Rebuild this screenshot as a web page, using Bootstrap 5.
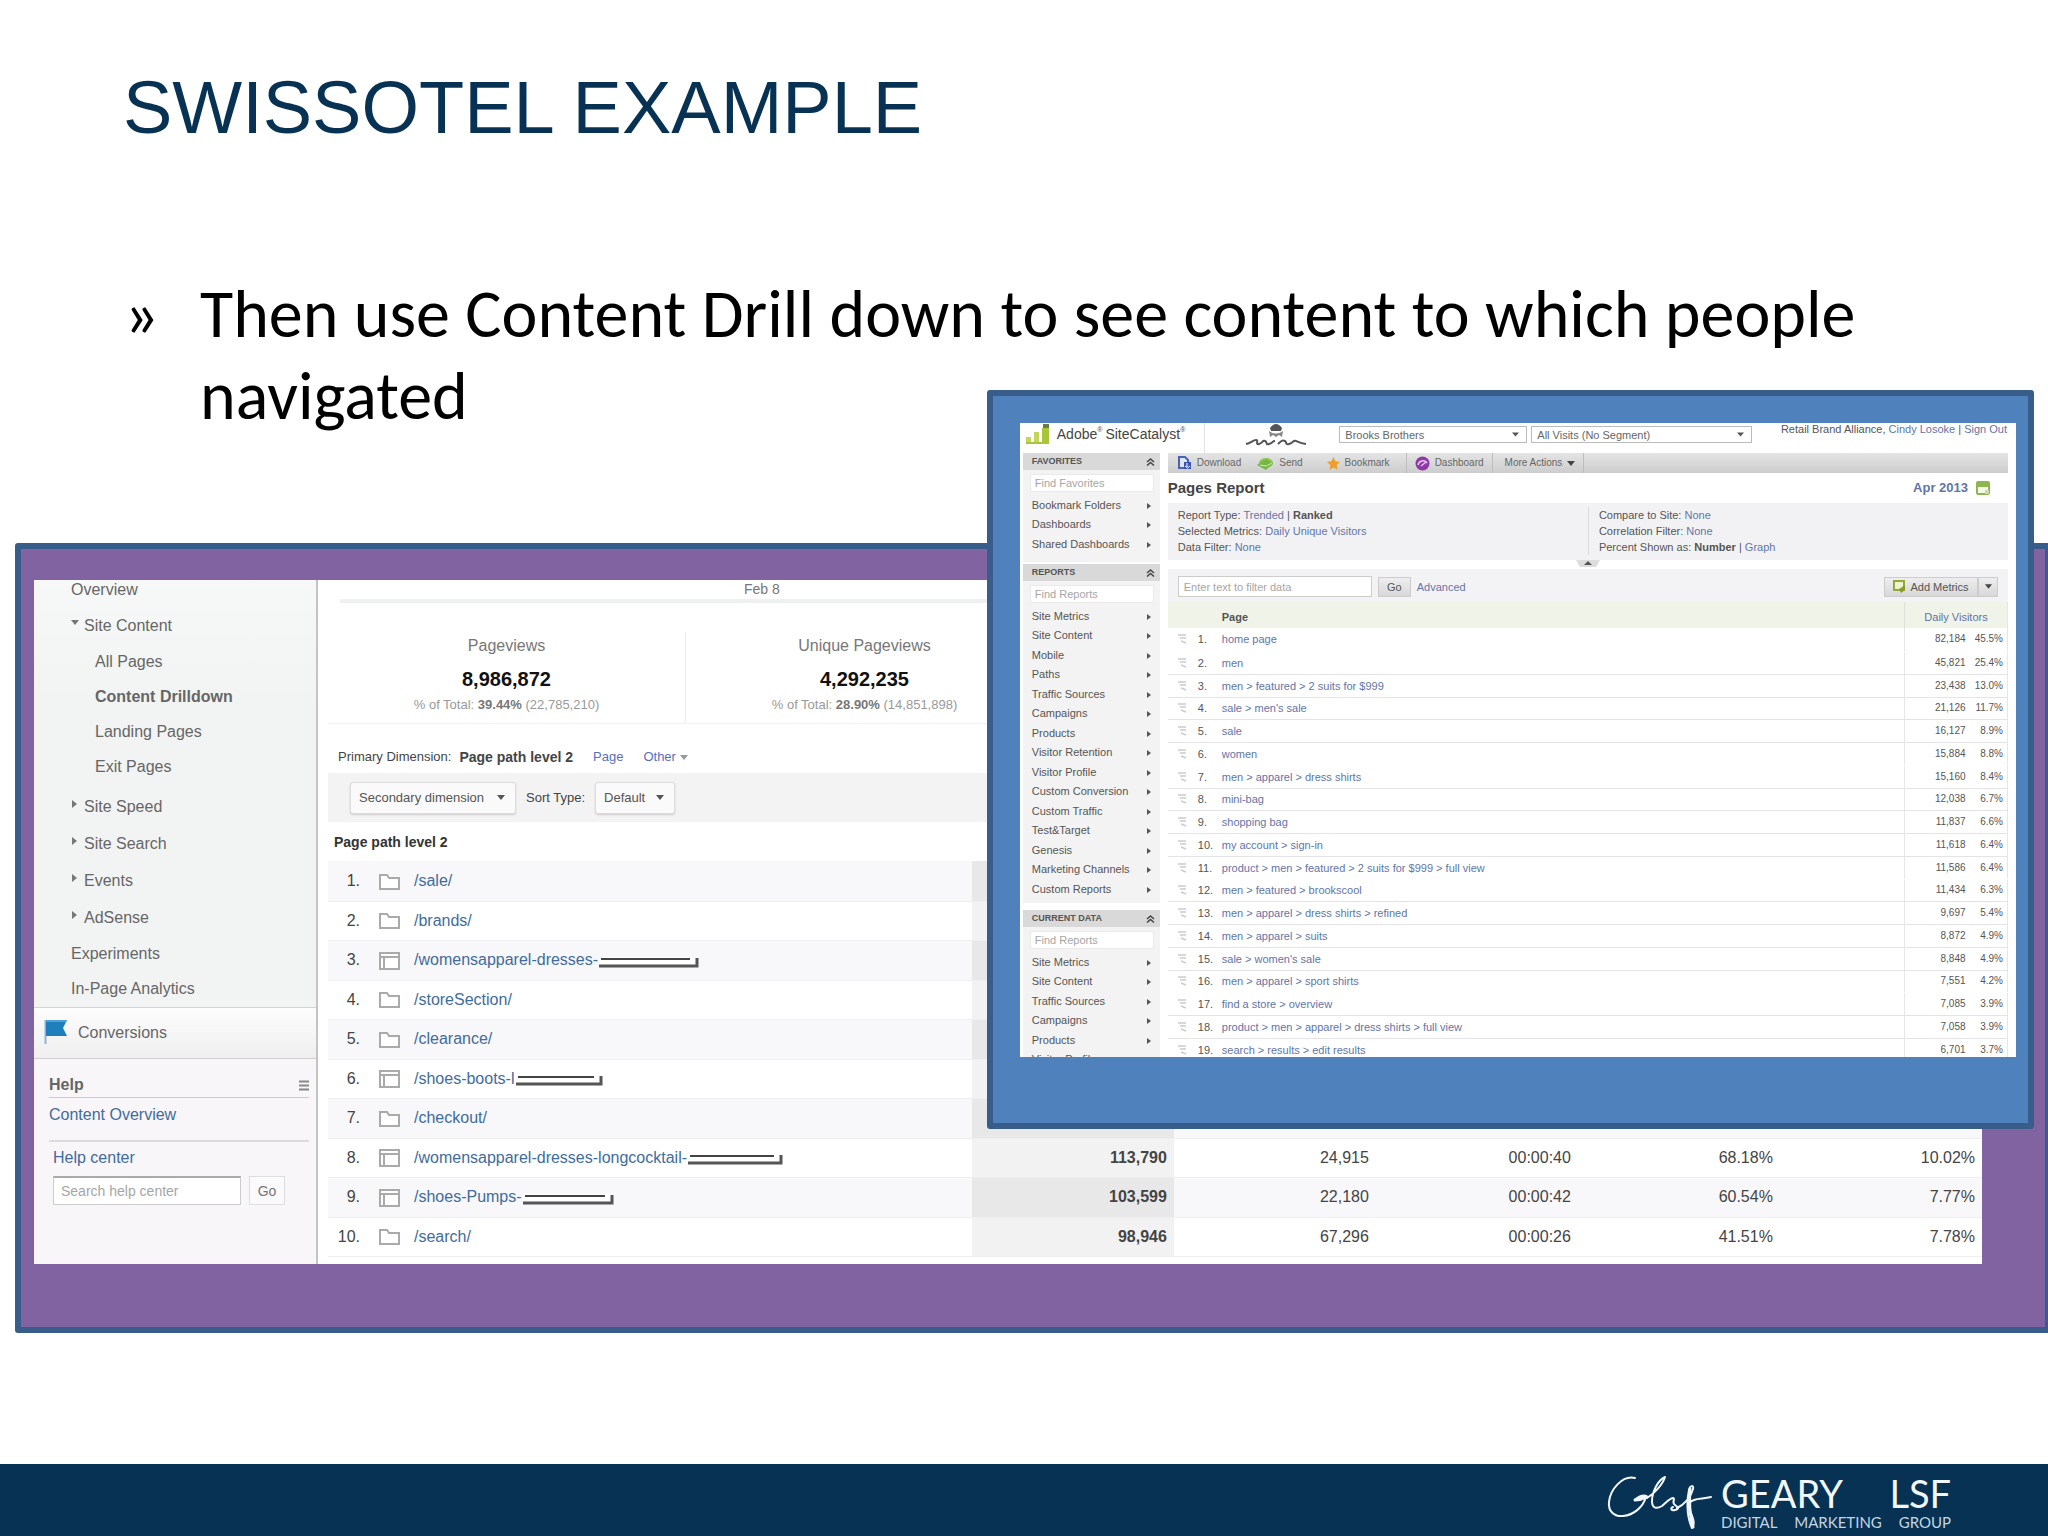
<!DOCTYPE html>
<html lang="en">
<head>
<meta charset="utf-8">
<meta name="viewport" content="width=device-width, initial-scale=1">
<title>Swissotel Example</title>
<link href="https://cdn.jsdelivr.net/npm/bootstrap@5.3.0/dist/css/bootstrap.min.css" rel="stylesheet">
<style>
:root{--navy:#073253;--edge:#385d8a;--purple:#8263a1;--blue:#4f81bd;
--caret:url("data:image/svg+xml,%3Csvg xmlns='http://www.w3.org/2000/svg' viewBox='0 0 10 6'%3E%3Cpath d='M0 0h10L5 6z' fill='%23555'/%3E%3C/svg%3E")}
body{font-family:"Liberation Sans",Arial,sans-serif;background:#fff;color:#000;overflow-x:hidden}
a{text-decoration:none}
.slide{min-height:100vh}
.slide-title{font-size:74px;line-height:90px;color:var(--navy);padding:63px 123px 0;margin:0 0 120px}
.points{font-family:Carlito,Lato,sans-serif;font-size:68px;line-height:82px;padding:0 124px;margin:0 0 106px}
.points .chev{width:76px;flex:none}
.stage{margin-left:15px;margin-bottom:130px}
.frame-purple{background:var(--purple);border:6px solid var(--edge);border-right-width:3px;padding:31px 63px 63px 13px;border-radius:3px 0 0 3px}
.frame-blue{position:absolute;top:-153px;left:47.8%;right:14px;background:var(--blue);border:6px solid var(--edge);border-radius:3px;padding:27px 12px 66px 27px}

/* analytics report */
.ga{background:#fff;font-size:16px;color:#444;overflow:hidden}
.ga-side{width:284px;flex:none;background:#f8f6f9;border-right:2px solid #c4c4c6;line-height:20px;color:#666}
.ga-nav{background:linear-gradient(#f7f8f8,#f2f4f3 30%);margin:0;padding:0 0 1px 37px;border-bottom:1px solid #d4d4d4}
.ga-nav a{display:flex;align-items:center;height:35px;color:inherit}
.ga-nav .grp a{height:37px;gap:5px}
.ga-nav .subs{padding-left:24px;margin-bottom:4px}
.ga-nav li:first-child{margin-top:-8px}
.tri{width:8px;height:8px;flex:none;margin-top:-6px}
.conv{height:51px;gap:10px;padding-left:10px;background:linear-gradient(#fdfdfd,#efefef);border-bottom:1px solid #d0d0d0}
.help{padding:16px 7px 20px 15px}
.help h2{font-size:16px;line-height:20px;font-weight:700;margin:0;padding-bottom:2px;border-bottom:1px solid #ccc}
.help a,.paths a{color:#3f6c9c}
.help .over{display:block;padding:7px 0 15px;border-bottom:2px solid #dcdce0;line-height:20px}
.help label{display:block;color:#3f6c9c;padding:6px 4px 8px;line-height:20px}
.help input{width:188px;height:29px;border:1px solid #ccc;border-top:2px solid #aaa;padding:0 7px;font-size:14px;border-radius:0;background:#fff}
.help input::placeholder,.sc input::placeholder{color:#a6a6a6;opacity:1}
.help button{width:36px;height:29px;font-size:14px;border:1px solid #ddd;background:#faf9fb;color:#777;padding:0}
.ga-main{padding-left:10px;min-width:0}
.axis{height:23px;margin-left:12px;border-bottom:4px solid #eff0f0;font-size:14px;line-height:19px;color:#777;padding-left:404px}
.metric{width:358px;height:91px;margin-top:29px;border-right:1px solid #ededed;text-align:center;line-height:20px;color:#777;padding-top:4px}
.metric b{display:block;font-size:20px;line-height:24px;color:#111;margin:11px 0 4px}
.metric small{font-size:13px;line-height:20px;display:block;color:#999}
.metric small strong{color:#777}
.dims{height:50px;padding:17px 0 0 10px;font-size:13px;line-height:32px;gap:20px;border-top:1px solid #f2f2f2}
.dims b{font-size:14px;margin-left:-12px}
.dims a{color:#5570c0}
.tools{height:49px;background:#f3f3f3;padding-left:22px;gap:10px;font-size:13px}
.tools select{appearance:none;height:32px;border:1px solid #dcdcdc;border-radius:3px;background:#fafafa var(--caret) no-repeat right 10px center/8px 5px;padding:0 8px;color:#555;box-shadow:0 1px 2px #ccc}
.tools .s1{width:166px}.tools .s2{width:80px}
.paths{table-layout:fixed;width:100%;margin-bottom:7px;color:#444;line-height:20px}
.paths th{height:39px;padding:0 6px;font-size:14px;color:#333}
.paths td{padding:0;height:39px;border-bottom:1px solid #efeff0}
.paths tr:nth-child(odd) td{height:40px;background:#f8f7f9}
.paths .no{width:32px;text-align:right}
.paths .ic{width:54px;padding-left:19px}
.paths .val{width:202px;text-align:right;padding-right:7px}
.paths td.hot{background:#f2f2f2;font-weight:700}
.paths tr:nth-child(odd) td.hot{background:#e8e8e8}
.paths svg{display:inline-block;vertical-align:middle}

/* site catalyst report */
.sc{background:#fff;height:634px;overflow:hidden;font-size:11px;line-height:16px;color:#555}
.sc-top{height:30px;padding-left:6px}
.sc-brand{font-size:14px;line-height:22px;color:#444;margin-left:7px}
.sc-brand i{font-style:normal;font-size:7px;line-height:14px;margin-right:3px}
.sc-top select{appearance:none;height:17px;border:1px solid #bbb;font-size:11px;line-height:14px;color:#666;padding:0 5px;margin-top:3px;background:#fff var(--caret) no-repeat right 7px center/7px 5px}
.sc-top .w1{width:188px;margin-left:32px}.sc-top .w2{width:221px;margin-left:4px}
.sc-user{font-size:11px;line-height:12px;padding-right:9px;white-space:nowrap}
.sc a{color:#6275a8}
.sc-side{width:137px;flex:none;margin-left:3px}
.sc-box{background:#f3f3f3;margin-bottom:7px;padding-bottom:4px}
.sc-box.first{margin-bottom:2px;padding-bottom:8px}
.sc-box h3{font-size:9px;line-height:17px;font-weight:700;background:#d9d9d9;margin:0 0 4px;padding:0 5px 0 9px;color:#555}
.sc-box input{display:block;width:124px;height:18px;margin:0 0 4px 7px;border:1px solid #eaeaea;background:#fff;font-size:11px;padding:0 4px}
.sc-box ul{margin:0;padding:0 9px}
.sc-box li{height:19px;line-height:19px}
.sc-box li:nth-child(even){height:20px}
.sc-box li a{color:#555;display:flex;justify-content:space-between;align-items:center}
.sc-box li a::after{content:"";border:3px solid transparent;border-left:4px solid #555;border-right:0;width:0}
.sc-main{margin:0 8px 0 8px;min-width:0}
.sc-bar{height:20px;background:linear-gradient(#e4e4e4,#cdcdcd);font-size:10px;padding-left:10px}
.sc-bar button{border:0;background:none;padding:0;color:#666;display:flex;align-items:center;gap:5px;line-height:20px}
.sc-bar .sep,.rule{width:1px;background:#bdbdbd;align-self:stretch}
.rule{background:#e2e2e2}
.sc h2{font-size:15px;line-height:30px;font-weight:700;margin:0;color:#444}
.sc-date{font-size:13px;font-weight:700;gap:8px;padding-right:18px}
.sc-info{background:#f2f2f4;padding:4px 10px 5px;height:57px}
.sc-info>div{width:50%}
.sc-info .right{border-left:1px solid #ddd;padding-left:10px}
.handle{height:9px}
.sc-filter{height:33px;background:#f3f3f5;padding:2px 10px 0}
.sc-filter input{width:194px;height:21px;border:1px solid #ccc;font-size:11px;padding:0 5px}
.sc-filter button{height:20px;border:1px solid #ccc;background:linear-gradient(#eee,#d8d8d8);font-size:11px;line-height:16px;color:#555;padding:0}
.sc-filter .go{width:33px;margin:0 6px}
.sc-filter .add{width:94px;gap:4px}
.sc-filter .drop{width:20px}
.sc table{width:100%;table-layout:fixed;border-right:1px solid #e6e6e6}
.sc th{height:26px;background:#eff3e8;padding:3px 0 0;color:#555}
.sc td{height:23px;padding:0;border-bottom:1px solid #e4e4e6}
.sc tr:nth-child(4n) td{height:22px}
.sc tr:nth-child(5n+1) td{border-bottom-color:transparent}
.sc .c0{width:30px;padding-left:10px}.sc .c1{width:24px}
.sc .c3{width:61px;border-left:1px solid #e6e6e6;text-align:right;font-size:10px}
.sc .c4{width:42px;text-align:right;font-size:10px;padding-right:4px}
.sc th.vis{border-left:1px solid #dde0d8;text-align:center;font-weight:400}
.sc svg{display:block}

.slide-foot{height:72px;background:var(--navy);color:#f2f7fb;font-family:Lato,sans-serif;padding-right:97px;padding-top:9px}
.logo-words{width:230px}
.logo-words .big{font-size:38px;line-height:40px}
.logo-words .tiny{font-size:15px;line-height:18px;color:#c4d5e2}
</style>
</head>
<body>
<div class="slide d-flex flex-column">
  <header><h1 class="slide-title">SWISSOTEL EXAMPLE</h1></header>
  <ul class="points list-unstyled">
    <li class="d-flex"><span class="chev">»</span><span>Then use Content Drill down to see content to which people navigated</span></li>
  </ul>

  <main class="stage position-relative">
    <section class="frame-purple">
      <div class="ga d-flex">
        <aside class="ga-side">
          <ul class="ga-nav list-unstyled">
            <li><a href="#">Overview</a></li>
            <li class="grp"><a href="#"><svg class="tri" viewBox="0 0 8 8"><path d="M0 1h8L4 6z" fill="#777"/></svg>Site Content</a></li>
            <li><ul class="subs list-unstyled">
              <li class="mt-0"><a href="#">All Pages</a></li>
              <li><a href="#" class="fw-bold">Content Drilldown</a></li>
              <li><a href="#">Landing Pages</a></li>
              <li><a href="#">Exit Pages</a></li>
            </ul></li>
            <li class="grp"><a href="#"><svg class="tri" viewBox="0 0 8 8"><path d="M1 0v8l5-4z" fill="#777"/></svg>Site Speed</a></li>
            <li class="grp"><a href="#"><svg class="tri" viewBox="0 0 8 8"><path d="M1 0v8l5-4z" fill="#777"/></svg>Site Search</a></li>
            <li class="grp"><a href="#"><svg class="tri" viewBox="0 0 8 8"><path d="M1 0v8l5-4z" fill="#777"/></svg>Events</a></li>
            <li class="grp"><a href="#"><svg class="tri" viewBox="0 0 8 8"><path d="M1 0v8l5-4z" fill="#777"/></svg>AdSense</a></li>
            <li><a href="#">Experiments</a></li>
            <li><a href="#">In-Page Analytics</a></li>
          </ul>
          <div class="conv d-flex align-items-center">
            <svg width="24" height="26" viewBox="0 0 24 26"><path d="M1.500 0v24" stroke="#8cb4d6" stroke-width="2"/><path d="M2 0h21l-4 8 4 8H2z" fill="#1f7fbd"/><path d="M2 0h21l-1 2H2z" fill="#4da3d6"/></svg>
            <span>Conversions</span>
          </div>
          <div class="help">
            <h2 class="d-flex justify-content-between align-items-center">Help
              <svg width="11" height="11" viewBox="0 0 11 11"><path d="M1 1.500h10M1 5.500h10M1 9.500h10" stroke="#888" stroke-width="2"/></svg></h2>
            <a href="#" class="over">Content Overview</a>
            <label for="hc">Help center</label>
            <form class="d-flex gap-2 ps-1"><input id="hc" type="text" placeholder="Search help center"><button type="button">Go</button></form>
          </div>
        </aside>
        <div class="ga-main flex-grow-1">
          <div class="axis">Feb 8</div>
          <div class="d-flex">
            <div class="metric">Pageviews<b>8,986,872</b><small>% of Total: <strong>39.44%</strong> (22,785,210)</small></div>
            <div class="metric">Unique Pageviews<b>4,292,235</b><small>% of Total: <strong>28.90%</strong> (14,851,898)</small></div>
          </div>
          <div class="dims d-flex">
            <span>Primary Dimension:</span><b>Page path level 2</b><a href="#">Page</a>
            <a href="#">Other <svg width="8" height="5" viewBox="0 0 8 5"><path d="M0 0h8L4 5z" fill="#999"/></svg></a>
          </div>
          <div class="tools d-flex align-items-center">
            <select class="s1" aria-label="Secondary dimension"><option>Secondary dimension</option></select>
            <label for="sort">Sort Type:</label>
            <select class="s2" id="sort"><option>Default</option></select>
          </div>
          <table class="paths">
            <colgroup><col class="no"><col class="ic"><col><col class="val"><col class="val"><col class="val"><col class="val"><col class="val"></colgroup>
            <thead><tr><th colspan="8">Page path level 2</th></tr></thead>
            <tbody id="paths"></tbody>
          </table>
        </div>
      </div>
    </section>

    <section class="frame-blue">
      <div class="sc">
        <div class="sc-top d-flex align-items-start">
          <svg width="24" height="21" viewBox="0 0 24 21"><g fill="#c3d65a"><path d="M0 14h5v6H0zM8 9h5v11H8z"/><path d="M16 5h7v15h-7z" fill="#a8c639"/></g><path d="M17 1h6v4h-6z" fill="#6c7a4a"/><path d="M0 20h23" stroke="#a8c639" stroke-width="2"/></svg>
          <span class="sc-brand d-flex"><span>Adobe</span><i>®</i><span>SiteCatalyst</span><i>®</i></span>
          <span class="rule ms-3 me-4"></span>
          <svg class="ms-3" width="62" height="24" viewBox="0 0 62 24"><path d="M25 5q6-8 12 0l-1 3H26z" fill="#555"/><path d="M24 8q7 5 14 0l-1 6-3-2-3 2-3-2-3 2z" fill="#888"/><path d="M1 21c5-1 7-4 10-4s-1 5 3 4 3-4 6-3 0 4 4 3 3-3 6-3M33 21c4-4 5-4 7-3s0 4 4 3 4-4 7-3 3 2 10 3" fill="none" stroke="#555" stroke-width="2"/></svg>
          <select class="w1" aria-label="Report suite"><option>Brooks Brothers</option></select>
          <select class="w2" aria-label="Segment"><option>All Visits (No Segment)</option></select>
          <span class="sc-user ms-auto">Retail Brand Alliance, <a href="#">Cindy Losoke</a> | <a href="#">Sign Out</a></span>
        </div>
        <div class="d-flex">
          <aside class="sc-side" id="side"></aside>
          <div class="sc-main flex-grow-1">
            <div class="sc-bar d-flex align-items-center">
              <button type="button"><svg width="14" height="14" viewBox="0 0 14 14"><path d="M1 1h6l3 3v8H1z" fill="#dfe8fa" stroke="#4a62b5" stroke-width="2"/><path d="M6 6h7v7H6z" fill="#3c54ad"/><path d="M9 7v4M7 10l2.500 2L12 10" stroke="#fff" fill="none"/></svg>Download</button>
              <button type="button" class="ms-3"><svg width="17" height="13" viewBox="0 0 17 13"><ellipse cx="9" cy="6" rx="7" ry="5" fill="#8fc657"/><path d="M0 8l9-6 7 4-7 7z" fill="#74b544"/><path d="M3 8l6 1 6-3" stroke="#d4edb8" fill="none"/></svg>Send</button>
              <button type="button" class="ms-4"><svg width="13" height="13" viewBox="0 0 13 13"><path d="M6.500 0l2 4.300 4.500.6-3.300 3.200.8 4.700-4-2.300-4 2.300.8-4.700L0 4.900l4.500-.6z" fill="#eaa02f"/></svg>Bookmark</button>
              <span class="sep ms-3 me-2"></span>
              <button type="button"><svg width="15" height="15" viewBox="0 0 15 15"><circle cx="7.500" cy="7.500" r="7" fill="#8e3aa5"/><path d="M3 9a5 5 0 0 1 9-2M6 10l5-4" stroke="#e6c3ee" stroke-width="1.500" fill="none"/></svg>Dashboard</button>
              <span class="sep mx-2"></span>
              <button type="button" class="ms-1">More Actions <svg width="8" height="5" viewBox="0 0 8 5"><path d="M0 0h8L4 5z" fill="#444"/></svg></button>
              <span class="sep ms-2"></span>
            </div>
            <div class="d-flex justify-content-between align-items-center">
              <h2>Pages Report</h2>
              <div class="sc-date d-flex align-items-center"><a href="#">Apr 2013</a><svg width="14" height="14" viewBox="0 0 14 14"><rect x="1" y="1" width="12" height="12" rx="1" fill="#f4f9ea" stroke="#8eb650" stroke-width="2"/><path d="M1 1h12v5H1z" fill="#8eb650"/><path d="M9 9h4v4H9z" fill="#c8dca4"/></svg></div>
            </div>
            <div class="sc-info d-flex">
              <div>Report Type: <a href="#">Trended</a> | <b>Ranked</b><br>Selected Metrics: <a href="#">Daily Unique Visitors</a><br>Data Filter: <a href="#">None</a></div>
              <div class="right">Compare to Site: <a href="#">None</a><br>Correlation Filter: <a href="#">None</a><br>Percent Shown as: <b>Number</b> | <a href="#">Graph</a></div>
            </div>
            <div class="handle d-flex justify-content-center"><svg width="24" height="7" viewBox="0 0 24 7"><path d="M0 0h24l-4 7H4z" fill="#ddd"/><path d="M8 5l4-4 4 4z" fill="#555"/></svg></div>
            <div class="sc-filter d-flex align-items-center">
              <input type="text" aria-label="Filter" placeholder="Enter text to filter data"><button type="button" class="go">Go</button><a href="#">Advanced</a>
              <button type="button" class="add ms-auto d-flex align-items-center justify-content-center"><svg width="13" height="13" viewBox="0 0 13 13"><rect x="1" y="1" width="10" height="9" fill="#eef5cf" stroke="#92a83a" stroke-width="2"/><path d="M6 9l6-4v5l-4 3z" fill="#8a9a30"/></svg>Add Metrics</button><button type="button" class="drop d-flex align-items-center justify-content-center" aria-label="More metrics"><svg width="7" height="5" viewBox="0 0 8 5"><path d="M0 0h8L4 5z" fill="#444"/></svg></button>
            </div>
            <table>
              <colgroup><col class="c0"><col class="c1"><col><col class="c3"><col class="c4"></colgroup>
              <thead><tr><th></th><th></th><th>Page</th><th colspan="2" class="vis"><a href="#">Daily Visitors</a></th></tr></thead>
              <tbody id="pages"></tbody>
            </table>
          </div>
        </div>
      </div>
    </section>
  </main>

  <footer class="slide-foot mt-auto d-flex justify-content-end align-items-start">
    <svg class="me-2" width="106" height="56" viewBox="0 0 106 56" fill="none" stroke="#f2f7fb" stroke-width="2" stroke-linecap="round" stroke-linejoin="round" aria-label="glsf signature">
      <path d="M28 5C15 2 3 17 2 29c-1 9 5 15 14 14 11-1 20-9 23-19"/>
      <path d="M28 27c4-3 9-5 12-3-4 0-9 2-12 3 4 0 8-1 12-3" stroke-width="3"/>
      <path d="M40 25c7-4 16-14 18-21-7 3-13 15-13 24 0 8 5 8 10 5 5-4 8-8 11-8 3 1-2 4 2 7s4 4 0 5-5-2-2-3"/>
      <path d="M70 35c7-3 14-11 16-19 1-4-3-4-4 1-2 9-3 25 3 38 4-5 0-12-3-20-1-4 1-7 5-8 5-2 10-1 17-3"/>
      <path d="M83 16c-1 12 0 27 3 38" stroke-width="3"/>
    </svg>
    <div class="logo-words">
      <div class="big d-flex justify-content-between"><span>GEARY</span><span>LSF</span></div>
      <div class="tiny d-flex justify-content-between"><span>DIGITAL</span><span>MARKETING</span><span>GROUP</span></div>
    </div>
  </footer>
</div>

<script>
const folder='<svg width="21" height="18" viewBox="0 0 21 18"><path d="M1 2h7l2 3h10v11H1z" fill="#fff" stroke="#aaa" stroke-width="2"/></svg>';
const page='<svg width="21" height="18" viewBox="0 0 21 18"><path d="M1 1h19v16H1zM1 5h19M5 5v12" fill="#fff" stroke="#aaa" stroke-width="2"/></svg>';
const bar=w=>`<svg width="${w}" height="14" viewBox="0 0 ${w} 14"><path d="M1 3h${w-4}v8H1z" fill="#fff"/><path d="M3 5h${w-12}" stroke="#444" stroke-width="2"/><path d="M1 12h${w-3}V4" fill="none" stroke="#555" stroke-width="3"/></svg>`;
const paths=[['/sale/',0],['/brands/',0],['/womensapparel-dresses-',101],['/storeSection/',0],['/clearance/',0],['/shoes-boots-l',88],['/checkout/',0],
['/womensapparel-dresses-longcocktail-',96,'113,790','24,915','00:00:40','68.18%','10.02%'],
['/shoes-Pumps-',92,'103,599','22,180','00:00:42','60.54%','7.77%'],
['/search/',0,'98,946','67,296','00:00:26','41.51%','7.78%']];
document.getElementById('paths').innerHTML=paths.map((p,i)=>`<tr><td class="no">${i+1}.</td><td class="ic">${p[1]?page:folder}</td><td><a href="#">${p[0]}</a>${p[1]?bar(p[1]):''}</td>`+
 [2,3,4,5,6].map(k=>`<td class="val${k==2?' hot':''}">${p[k]||''}</td>`).join('')+'</tr>').join('');

const pages=['home page|82,184|45.5%','men|45,821|25.4%','men > featured > 2 suits for $999|23,438|13.0%',"sale > men's sale|21,126|11.7%",'sale|16,127|8.9%','women|15,884|8.8%',
'men > apparel > dress shirts|15,160|8.4%','mini-bag|12,038|6.7%','shopping bag|11,837|6.6%','my account > sign-in|11,618|6.4%','product > men > featured > 2 suits for $999 > full view|11,586|6.4%',
'men > featured > brookscool|11,434|6.3%','men > apparel > dress shirts > refined|9,697|5.4%','men > apparel > suits|8,872|4.9%',"sale > women's sale|8,848|4.9%",'men > apparel > sport shirts|7,551|4.2%',
'find a store > overview|7,085|3.9%','product > men > apparel > dress shirts > full view|7,058|3.9%','search > results > edit results|6,701|3.7%'];
const tag='<svg width="9" height="10" viewBox="0 0 9 10"><path d="M0 1h8M2 4h6M3 7l5 2" stroke="#ccc" stroke-width="1.500"/></svg>';
document.getElementById('pages').innerHTML=pages.map((r,i)=>{const c=r.replace(/>/g,'&gt;').split('|');
 return `<tr><td class="c0">${tag}</td><td>${i+1}.</td><td><a href="#">${c[0]}</a></td><td class="c3">${c[1]}</td><td class="c4">${c[2]}</td></tr>`}).join('');

const boxes=[['FAVORITES','Find Favorites',['Bookmark Folders','Dashboards','Shared Dashboards']],
['REPORTS','Find Reports',['Site Metrics','Site Content','Mobile','Paths','Traffic Sources','Campaigns','Products','Visitor Retention','Visitor Profile','Custom Conversion','Custom Traffic','Test&amp;Target','Genesis','Marketing Channels','Custom Reports']],
['CURRENT DATA','Find Reports',['Site Metrics','Site Content','Traffic Sources','Campaigns','Products','Visitor Profile']]];
document.getElementById('side').innerHTML=boxes.map((b,i)=>`<section class="sc-box${i?'':' first'}"><h3 class="d-flex justify-content-between align-items-center">${b[0]}<svg width="9" height="8" viewBox="0 0 9 8"><path d="M1 4l3.500-3L8 4M1 7.500l3.500-3 3.500 3" fill="none" stroke="#444" stroke-width="1.500"/></svg></h3><input type="text" aria-label="${b[1]}" placeholder="${b[1]}"><ul class="list-unstyled">${b[2].map(t=>`<li><a href="#">${t}</a></li>`).join('')}</ul></section>`).join('');
</script>
<script src="https://cdn.jsdelivr.net/npm/bootstrap@5.3.0/dist/js/bootstrap.bundle.min.js"></script>
</body>
</html>
